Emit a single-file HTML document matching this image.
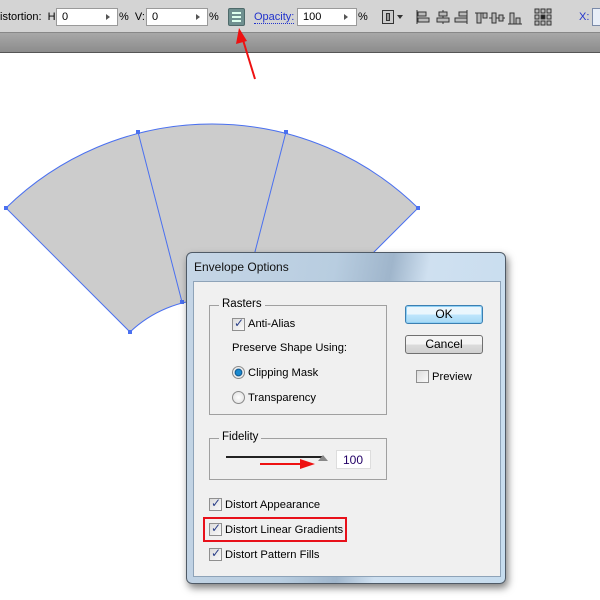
<!DOCTYPE html>
<html><head><meta charset="utf-8"><style>
*{margin:0;padding:0;box-sizing:border-box}
body{width:600px;height:600px;position:relative;overflow:hidden;background:#fff;font-family:"Liberation Sans",Arial,sans-serif;font-size:11px;color:#000}
.a{position:absolute}
#tb{left:0;top:0;width:600px;height:33px;background:#d4d4d4;border-bottom:1px solid #888}
#strip{left:0;top:33px;width:600px;height:20px;background:linear-gradient(#a8a8a8,#8c8c8c);border-bottom:1px solid #555}
.inp{background:#fff;border:1px solid #9a9a9a;height:18px;top:8px;font-size:11px;padding:2px 5px;color:#000}
.tri{width:0;height:0;border-left:4px solid #555;border-top:3px solid transparent;border-bottom:3px solid transparent;top:14px}
.t{font-size:11px;top:11px}
#dlg{left:186px;top:252px;width:320px;height:332px;border-radius:6px;background:linear-gradient(100deg,#c6d6e6 0%,#b8cde0 40%,#9fb5cb 55%,#cfe0f0 65%,#c6dcee 100%);border:1px solid #4f5a66;box-shadow:2px 4px 8px rgba(0,0,0,.5)}
#pan{left:6px;top:28px;width:308px;height:296px;background:#f0f0f0;border:1px solid #8ea3b8}
.grp{border:1px solid #a0a0a0}
.gl{background:#f0f0f0;padding:0 3px;font-size:11.5px}
.cb{width:13px;height:13px;border:1px solid #8f8f8f;background:linear-gradient(135deg,#dcdcdc,#fafafa)}
.cb.c::after{content:"✓";position:absolute;left:1px;top:-3px;font-family:"DejaVu Sans";font-size:12px;color:#2a3f88;font-weight:bold}
.lb{font-size:11.2px;top:0}
.btn{width:78px;height:19px;border:1px solid #707070;border-radius:3px;background:linear-gradient(#f4f4f4 50%,#dcdcdc 50%,#d0d0d0);text-align:center;font-size:12px;line-height:17px}
.rad{width:13px;height:13px;border-radius:50%;border:1px solid #8a8a8a;background:radial-gradient(#fff,#ddd)}
</style></head><body>
<div id="tb" class="a"></div>
<div class="a t" style="left:0">istortion:&nbsp; H:</div>
<div class="a inp" style="left:56px;width:62px">0</div>
<div class="a tri" style="left:106px"></div>
<div class="a t" style="left:119px">%&nbsp; V:</div>
<div class="a inp" style="left:146px;width:62px">0</div>
<div class="a tri" style="left:196px"></div>
<div class="a t" style="left:209px">%</div>
<div class="a" style="left:228px;top:8px;width:17px;height:18px;border:1px solid #4e6a6a;background:#6f9090;border-radius:2px">
<div class="a" style="left:3px;top:3px;width:9px;height:2px;background:#dfe"></div><div class="a" style="left:3px;top:7px;width:9px;height:2px;background:#dfe"></div><div class="a" style="left:3px;top:11px;width:9px;height:2px;background:#dfe"></div></div>
<div class="a t" style="left:254px;color:#2233cc;border-bottom:1px dotted #2233cc">Opacity:</div>
<div class="a inp" style="left:297px;width:60px">100</div>
<div class="a tri" style="left:344px"></div>
<div class="a t" style="left:358px">%</div>
<div class="a" style="left:382px;top:10px;width:12px;height:14px;border:1px solid #333;background:#ccc"><div class="a" style="left:3px;top:2px;width:4px;height:8px;border:1px solid #333;background:#999"></div></div>
<div class="a" style="left:397px;top:15px;border-top:4px solid #333;border-left:3px solid transparent;border-right:3px solid transparent"></div>
<svg class="a" style="left:415px;top:8px" width="185" height="20" viewBox="0 0 185 20" fill="#bbb" stroke="#333" stroke-width="1">
<line x1="2" y1="2" x2="2" y2="16"/><rect x="3" y="4" width="8" height="4"/><rect x="3" y="10" width="11" height="4"/>
<line x1="28" y1="2" x2="28" y2="16"/><rect x="24" y="4" width="8" height="4"/><rect x="22" y="10" width="12" height="4"/>
<line x1="52" y1="2" x2="52" y2="16"/><rect x="44" y="4" width="8" height="4"/><rect x="40" y="10" width="12" height="4"/>
<line x1="60" y1="5" x2="72" y2="5"/><rect x="62" y="5" width="4" height="10"/><rect x="68" y="5" width="4" height="5"/>
<line x1="74" y1="10" x2="90" y2="10"/><rect x="77" y="5" width="4" height="10"/><rect x="84" y="7" width="4" height="6"/>
<line x1="93" y1="16" x2="107" y2="16"/><rect x="95" y="5" width="4" height="11"/><rect x="101" y="10" width="4" height="6"/>
<rect x="120" y="1" width="4" height="4"/><rect x="126" y="1" width="4" height="4"/><rect x="132" y="1" width="4" height="4"/><rect x="120" y="7" width="4" height="4"/><rect x="126" y="7" width="4" height="4" fill="#222"/><rect x="132" y="7" width="4" height="4"/><rect x="120" y="13" width="4" height="4"/><rect x="126" y="13" width="4" height="4"/><rect x="132" y="13" width="4" height="4"/>
</svg>
<div class="a t" style="left:579px;color:#2233cc">X:</div>
<div class="a" style="left:592px;top:8px;width:10px;height:18px;border:1px solid #7a8aa8;background:#e8eef8"></div>
<div id="strip" class="a"></div>

<svg class="a" style="left:0;top:0" width="600" height="600">
<path d="M6,208 A294.6,294.6 0 0 1 418,208 L294,332 A119,119 0 0 0 130,332 Z" fill="#cccccc" stroke="#4a70f0" stroke-width="1"/>
<line x1="138" y1="132" x2="182" y2="302" stroke="#4a70f0"/>
<line x1="286" y1="132" x2="242" y2="302" stroke="#4a70f0"/>
<g fill="#4a70f0"><rect x="4" y="206" width="4" height="4"/><rect x="136" y="130" width="4" height="4"/><rect x="284" y="130" width="4" height="4"/><rect x="416" y="206" width="4" height="4"/><rect x="128" y="330" width="4" height="4"/><rect x="180" y="300" width="4" height="4"/></g>
<line x1="255" y1="79" x2="243" y2="40" stroke="#ee1111" stroke-width="2"/>
<polygon points="239,28 236,44 247,41" fill="#ee1111"/>
</svg>

<div id="dlg" class="a">
<div class="a" style="left:7px;top:7px;font-size:12px;color:#111">Envelope Options</div>
<div id="pan" class="a">
 <div class="a grp" style="left:15px;top:23px;width:178px;height:110px"></div>
 <div class="a gl" style="left:25px;top:16px">Rasters</div>
 <div class="a cb c" style="left:38px;top:36px"></div><div class="a lb" style="left:54px;top:36px">Anti-Alias</div>
 <div class="a lb" style="left:38px;top:60px">Preserve Shape Using:</div>
 <div class="a rad" style="left:38px;top:84px;background:radial-gradient(#1a8ad0 30%,#0b4f86 45%,#eee 55%)"></div><div class="a lb" style="left:54px;top:85px">Clipping Mask</div>
 <div class="a rad" style="left:38px;top:109px"></div><div class="a lb" style="left:54px;top:110px">Transparency</div>
 <div class="a grp" style="left:15px;top:156px;width:178px;height:42px"></div>
 <div class="a gl" style="left:25px;top:149px">Fidelity</div>
 <div class="a" style="left:32px;top:174px;width:98px;height:2px;background:#222"></div>
 <div class="a" style="left:124px;top:173px;border-bottom:6px solid #888;border-left:5px solid transparent;border-right:5px solid transparent"></div>
 <div class="a" style="left:142px;top:168px;width:35px;height:19px;background:#fff;border:1px solid #ddd;font-size:12px;padding:2px 6px;color:#220066">100</div>
 <svg class="a" style="left:66px;top:174px" width="60" height="16"><line x1="0" y1="8" x2="45" y2="8" stroke="#ee1111" stroke-width="2"/><polygon points="40,3 55,8 40,13" fill="#ee1111"/></svg>
 <div class="a cb c" style="left:15px;top:216px"></div><div class="a lb" style="left:31px;top:217px">Distort Appearance</div>
 <div class="a" style="left:9px;top:235px;width:144px;height:25px;border:2px solid #e8101a"></div>
 <div class="a cb c" style="left:15px;top:241px"></div><div class="a lb" style="left:31px;top:242px">Distort Linear Gradients</div>
 <div class="a cb c" style="left:15px;top:266px"></div><div class="a lb" style="left:31px;top:267px">Distort Pattern Fills</div>
 <div class="a btn" style="left:211px;top:23px;border-color:#3c7fb1;background:linear-gradient(#eaf6fd 50%,#bee6fd 50%,#a7d9f5);box-shadow:inset 0 0 0 1px #8fd0f5">OK</div>
 <div class="a btn" style="left:211px;top:53px">Cancel</div>
 <div class="a cb" style="left:222px;top:88px"></div><div class="a lb" style="left:238px;top:89px">Preview</div>
</div>
</div>
</body></html>
